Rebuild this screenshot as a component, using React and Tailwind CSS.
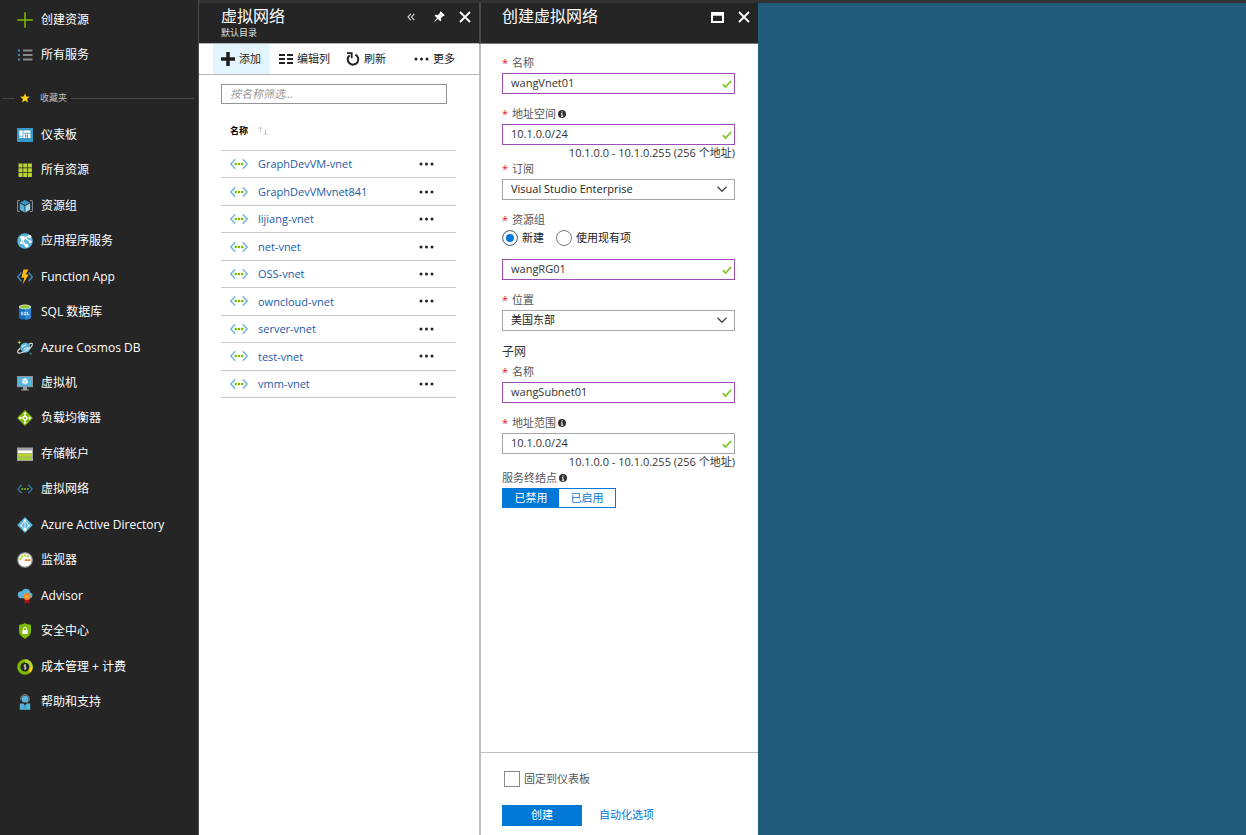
import React, { useState } from "react";

/* ---------- sidebar icons ---------- */

function Icon({ children }) {
  return (
    <svg viewBox="0 0 16 16" className="size-4 shrink-0" aria-hidden="true">
      {children}
    </svg>
  );
}

const PlusIcon = () => (
  <Icon>
    <path d="M8 0.2v15.6M0.2 8h15.6" stroke="#7fba00" strokeWidth="1.5" />
  </Icon>
);

const ListIcon = () => (
  <Icon>
    <path d="M1 3.5h2M1 8h2M1 12.5h2" stroke="#3f8fb0" strokeWidth="1.8" />
    <path d="M6 3.5h9.5M6 8h9.5M6 12.5h9.5" stroke="#8a8a8a" strokeWidth="1.8" />
  </Icon>
);

const DashboardIcon = () => (
  <Icon>
    <rect y="1" width="16" height="14" fill="#3999c6" />
    <path d="M2.300 3.500h3.400v5.200H2.300zM6.300 3.500h7.200v2.200H6.300zM2.300 9.400h3.400V11H2.300zM6.300 6.400h1.700V11H6.300zM8.700 9.400h1.300V11H8.700zM8.700 6.400h1.300v2.200H8.700zM10.800 6.400h2.700V11h-2.700z" fill="#fff" />
  </Icon>
);

const GridIcon = () => (
  <Icon>
    <path d="M1.5 1.5h4v4h-4zM6.2 1.5h4v4h-4zM10.9 1.5h4v4h-4zM1.5 6.2h4v4h-4zM6.2 6.2h4v4h-4zM10.9 6.2h4v4h-4zM1.5 10.9h4v4h-4zM6.2 10.9h4v4h-4zM10.9 10.9h4v4h-4z" fill="#b8d432" />
  </Icon>
);

const ResourceGroupIcon = () => (
  <Icon>
    <path d="M3 2.5H1.4a.8.8 0 0 0-.8.8v9.4a.8.8 0 0 0 .8.8H3M13 2.5h1.6a.8.8 0 0 1 .8.8v9.4a.8.8 0 0 1-.8.8H13" fill="none" stroke="#8a8a8a" strokeWidth="1.1" />
    <path d="M8 2l5 2.4L8 6.9 3 4.4z" fill="#3999c6" />
    <path d="M2.8 5.3l4.8 2.4v6.8l-4.8-2.7z" fill="#59b4d9" />
    <path d="M13.2 5.3L8.4 7.7v6.8l4.8-2.7z" fill="#a5d6ea" />
  </Icon>
);

const AppServiceIcon = () => (
  <Icon>
    <circle cx="8" cy="8" r="7.8" fill="#59b4d9" />
    <path d="M2.8 4.2C6 3.8 9.5 5.5 13 8.5M6 5.2c-.2 2.8.6 5 3.6 7.4M4 9.5l2-4.3M6 5.2L12.4 3M9.6 12.6L4.2 9.4" stroke="#fff" strokeWidth="1.1" fill="none" />
    <circle cx="5.8" cy="5.2" r="2.2" fill="#fff" />
    <circle cx="4.2" cy="9.8" r="1.4" fill="#fff" />
    <circle cx="9.6" cy="12.6" r="1.9" fill="#fff" />
    <circle cx="12.6" cy="3.6" r="1.7" fill="#fff" />
    <circle cx="13.2" cy="8.8" r="1.4" fill="#fff" />
  </Icon>
);

const FunctionIcon = () => (
  <Icon>
    <path d="M4.4 3.4L.7 7.8l3.7 4.4M11.6 3.4l3.7 4.4-3.7 4.4" fill="none" stroke="#3f87b0" strokeWidth="1.5" />
    <path d="M6.5.6h5L8.7 5.4h3.1L5.6 15.4l1.7-6.7H4.3z" fill="#fcb813" />
  </Icon>
);

const SqlIcon = () => (
  <Icon>
    <path d="M2 2.8v10.6c0 1.2 2.7 2.2 6 2.2s6-1 6-2.2V2.8z" fill="#1070c4" />
    <path d="M8 2.8h6v10.6c0 1.2-2.7 2.2-6 2.2z" fill="#2f86d0" />
    <ellipse cx="8" cy="2.9" rx="6" ry="2.4" fill="#e6efe0" />
    <ellipse cx="8" cy="2.8" rx="4.8" ry="1.6" fill="#8fc31f" />
    <path d="M5.8 8.2H4.2v1.2h1.4v1.4H3.8M7.1 8.2h1.8v2.5H7.1zM8.4 10.4l.9 1.1M10.5 7.9v2.8h1.8" fill="none" stroke="#fff" strokeWidth=".75" />
  </Icon>
);

const CosmosIcon = () => (
  <Icon>
    <path d="M11.500 4.400C14 3.100 15.600 3 15.500 4.400" fill="none" stroke="#d5dde0" strokeWidth="1.200" />
    <circle cx="8.300" cy="7.800" r="5" fill="#59b4d9" />
    <path d="M4.500 6.400c2 .4 2.600-1.300 4.600-1M7 8.800c2 .4 3-1 5.600-.8" stroke="#c4e6f4" strokeWidth="1.500" fill="none" />
    <path d="M15.500 4.400c-.2 1.900-3.300 4.700-7 6.600C4.800 13 1.100 13.900.7 12.300.4 11.100 1.600 9.500 3.400 8" fill="none" stroke="#d5dde0" strokeWidth="1.200" />
    <path d="M2.300.2l.6 1.500 1.500.6-1.500.6-.6 1.500-.6-1.500-1.500-.6 1.500-.6z" fill="#b8d432" />
    <circle cx="13.700" cy="13.700" r="1.100" fill="#2f86a8" />
  </Icon>
);

const VmIcon = () => (
  <Icon>
    <rect y="1" width="16" height="11.200" fill="#8b9399" />
    <rect x="1" y="2" width="14" height="9.200" fill="#59b4d9" />
    <path d="M6 12h4v2.400h2v1.200H4v-1.200h2z" fill="#a0a1a2" />
    <path d="M8 3.200l2.700 1.400v3.400L8 9.600 5.300 8V4.600z" fill="#fff" />
    <path d="M5.300 4.600L8 6l2.700-1.400M8 6v3.600" stroke="#59b4d9" strokeWidth=".6" fill="none" />
  </Icon>
);

const LoadBalancerIcon = () => (
  <Icon>
    <path d="M8 .1L15.900 8 8 15.900.100 8z" fill="#7fba00" />
    <path d="M8 3v10M3 8h10" stroke="#fff" strokeWidth="1.200" />
    <path d="M8 1.700l1.700 2.200H6.300zM8 14.300l1.700-2.200H6.300zM1.700 8l2.200-1.700v3.400zM14.300 8l-2.200-1.700v3.400z" fill="#fff" />
    <circle cx="8" cy="8" r="2.500" fill="#fff" />
    <circle cx="8" cy="8" r="1.100" fill="#7fba00" />
  </Icon>
);

const StorageIcon = () => (
  <Icon>
    <rect y="1.500" width="16" height="13.500" fill="#a0a1a2" />
    <rect x="1" y="4.500" width="14" height="2.500" fill="#fff" />
    <rect x="1" y="7.600" width="14" height="3" fill="#b8d432" />
    <rect x="1" y="11.200" width="14" height="3" fill="#a5cd3c" />
  </Icon>
);

const NetworkIcon = () => (
  <Icon>
    <path d="M4.700 3.700L.8 8l3.900 4.300M11.300 3.700L15.200 8l-3.900 4.300" fill="none" stroke="#3a789c" strokeWidth="1.300" />
    <circle cx="5.100" cy="8" r="1" fill="#7fba00" />
    <circle cx="8" cy="8" r="1" fill="#7fba00" />
    <circle cx="10.900" cy="8" r="1" fill="#7fba00" />
  </Icon>
);

const DirectoryIcon = () => (
  <Icon>
    <path d="M8 .1L15.900 8 8 15.900.100 8z" fill="#59b4d9" />
    <path d="M8 3v10M8 3.200L4 8.600 8 12.800l4-4.200z" fill="none" stroke="#fff" strokeWidth=".9" />
    <circle cx="8" cy="3.400" r="1.200" fill="#fff" />
    <circle cx="4.200" cy="8.600" r="1.100" fill="#fff" />
    <circle cx="11.800" cy="8.600" r="1.100" fill="#fff" />
    <circle cx="8" cy="12.500" r="1.500" fill="#fff" />
  </Icon>
);

const MonitorIcon = () => (
  <Icon>
    <circle cx="8" cy="8" r="7.200" fill="#fff" stroke="#a0a1a2" strokeWidth="1.300" />
    <path d="M3.400 8.200a4.700 4.700 0 0 1 8.400-3" fill="none" stroke="#b8d432" strokeWidth="2" strokeDasharray="2.400 .6" />
    <path d="M13.600 7.200v1.900H8.200a1 1 0 0 1 0-1.900z" fill="#ef7f2b" />
  </Icon>
);

const AdvisorIcon = () => (
  <Icon>
    <path d="M13 10.200a2.900 2.900 0 0 0 .3-5.700A4.400 4.400 0 0 0 5 3.300 3.500 3.500 0 0 0 3.600 10.200z" fill="#59b4d9" />
    <path d="M7.700 10.500h4.700v5.300l-2.300-1.500-2.400 1.500z" fill="#ba141a" />
    <circle cx="10" cy="8.600" r="3.500" fill="#f58220" />
    <circle cx="10" cy="8.600" r="2.100" fill="#fd9a3a" />
  </Icon>
);

const SecurityIcon = () => (
  <Icon>
    <path d="M8 .1c1.600 1.200 3.700 1.700 6 1.700v6.300c0 3.600-2.700 6-6 7.800-3.300-1.800-6-4.200-6-7.800V1.800C4.300 1.800 6.400 1.300 8 .1z" fill="#7fba00" />
    <rect x="5.400" y="7" width="5.200" height="4" fill="#fff" />
    <path d="M6.400 7V5.900a1.600 1.600 0 0 1 3.200 0V7" fill="none" stroke="#fff" strokeWidth="1" />
  </Icon>
);

const CostIcon = () => (
  <Icon>
    <circle cx="8" cy="8" r="6.200" fill="none" stroke="#7fba00" strokeWidth="3.200" />
    <path d="M8 1.800a6.200 6.200 0 0 1 6.200 6.200" fill="none" stroke="#b8d432" strokeWidth="3.200" />
    <path d="M14.200 8a6.200 6.200 0 0 1-1.900 4.500" fill="none" stroke="#fcd116" strokeWidth="3.200" />
    <path d="M9.200 6.600c-.6-.7-2.300-.6-2.300.3 0 1.300 2.400.8 2.400 2.100 0 1-1.900 1.100-2.500.3M8 5.200v5.600" fill="none" stroke="#fff" strokeWidth=".7" />
  </Icon>
);

const SupportIcon = () => (
  <Icon>
    <path d="M2.800 9.500h3.400L8 11.500l1.800-2h3.400v6.300H2.800z" fill="#59b4d9" />
    <circle cx="8" cy="5" r="3.500" fill="#59b4d9" />
    <path d="M3.700 5.800C3.300 2.500 5.500.6 8 .6s4.700 1.900 4.300 5.200c-.3 1.600-1.500 2.500-3.200 2.600" fill="none" stroke="#8a8a8a" strokeWidth="1" />
    <path d="M8 11.200l2 2-2 1.500-2-1.500z" fill="#3999c6" />
  </Icon>
);

/* ---------- small glyphs ---------- */

const CloseIcon = () => (
  <svg viewBox="0 0 12 12" className="size-3" aria-hidden="true">
    <path d="M1 1l10 10M11 1L1 11" stroke="#fff" strokeWidth="1.800" />
  </svg>
);

const CheckIcon = () => (
  <svg viewBox="0 0 10 10" className="pointer-events-none absolute right-[3px] top-[6px] size-[10px]" aria-hidden="true">
    <path d="M.8 5.200l2.700 3L9.200 1.800" fill="none" stroke="#8cc63a" strokeWidth="1.900" />
  </svg>
);

const ChevronIcon = () => (
  <svg viewBox="0 0 10 10" className="pointer-events-none absolute right-2 top-[5px] size-[10px]" aria-hidden="true">
    <path d="M.5 2.800L5 7.300l4.500-4.500" fill="none" stroke="#444" strokeWidth="1.300" />
  </svg>
);

const InfoIcon = () => (
  <svg viewBox="0 0 8 8" className="ml-[2px] size-2" aria-hidden="true">
    <circle cx="4" cy="4" r="4" fill="#333" />
    <path d="M4 1.300v1.200M3 3.600h1v2.600M3 6.300h2.200" stroke="#fff" strokeWidth="1" fill="none" />
  </svg>
);

const VnetIcon = () => (
  <svg viewBox="0 0 18 12" className="h-3 w-[18px]" aria-hidden="true">
    <path d="M5.200 1.200L.8 6l4.400 4.800M12.800 1.200L17.200 6l-4.400 4.800" fill="none" stroke="#71b6da" strokeWidth="1.400" />
    <circle cx="5.800" cy="6" r="1.300" fill="#7fba00" />
    <circle cx="9" cy="6" r="1.300" fill="#7fba00" />
    <circle cx="12.200" cy="6" r="1.300" fill="#7fba00" />
  </svg>
);

const DotsIcon = () => (
  <svg viewBox="0 0 15 4" className="h-1 w-[15px]" aria-hidden="true">
    <circle cx="2" cy="2" r="1.500" fill="#222" />
    <circle cx="7.500" cy="2" r="1.500" fill="#222" />
    <circle cx="13" cy="2" r="1.500" fill="#222" />
  </svg>
);

/* ---------- data ---------- */

const topItems = [
  { label: "创建资源", icon: PlusIcon },
  { label: "所有服务", icon: ListIcon },
];

const favorites = [
  { label: "仪表板", icon: DashboardIcon },
  { label: "所有资源", icon: GridIcon },
  { label: "资源组", icon: ResourceGroupIcon },
  { label: "应用程序服务", icon: AppServiceIcon },
  { label: "Function App", icon: FunctionIcon },
  { label: "SQL 数据库", icon: SqlIcon },
  { label: "Azure Cosmos DB", icon: CosmosIcon },
  { label: "虚拟机", icon: VmIcon },
  { label: "负载均衡器", icon: LoadBalancerIcon },
  { label: "存储帐户", icon: StorageIcon },
  { label: "虚拟网络", icon: NetworkIcon },
  { label: "Azure Active Directory", icon: DirectoryIcon },
  { label: "监视器", icon: MonitorIcon },
  { label: "Advisor", icon: AdvisorIcon },
  { label: "安全中心", icon: SecurityIcon },
  { label: "成本管理 + 计费", icon: CostIcon },
  { label: "帮助和支持", icon: SupportIcon },
];

const networks = [
  "GraphDevVM-vnet",
  "GraphDevVMvnet841",
  "lijiang-vnet",
  "net-vnet",
  "OSS-vnet",
  "owncloud-vnet",
  "server-vnet",
  "test-vnet",
  "vmm-vnet",
];

/* ---------- sidebar ---------- */

function NavLink({ item }) {
  const ItemIcon = item.icon;
  return (
    <a href="#" className="flex items-center gap-2 pl-[17px] text-xs text-white">
      <ItemIcon />
      <span>{item.label}</span>
    </a>
  );
}

function Sidebar() {
  return (
    <nav className="w-[199px] shrink-0 border-r border-[#4d4d4d] bg-[#252525] pt-[2px]">
      <div className="grid h-[70px] auto-rows-fr">
        {topItems.map((item) => (
          <NavLink key={item.label} item={item} />
        ))}
      </div>
      <div className="mt-[18px] flex h-4 items-center pl-[3px] pr-1">
        <span className="h-px w-3 bg-[#474747]" />
        <svg viewBox="0 0 10 10" className="ml-[5px] size-[10px]" aria-hidden="true">
          <path d="M5 .2l1.300 3.300 3.500.2-2.700 2.300.9 3.500L5 7.500 2 9.500l.9-3.500L.2 3.700l3.500-.2z" fill="#fcd116" />
        </svg>
        <span className="ml-[10px] text-[9px] text-[#c0c0c0]">收藏夹</span>
        <span className="ml-1 h-px flex-1 bg-[#474747]" />
      </div>
      <div className="mt-[11px] grid h-[603px] auto-rows-fr">
        {favorites.map((item) => (
          <NavLink key={item.label} item={item} />
        ))}
      </div>
    </nav>
  );
}

/* ---------- network list ---------- */

function NetworkList() {
  return (
    <section className="w-[280px] shrink-0">
      <header className="flex h-10 justify-between bg-[#252525] pl-[22px] pr-2 text-white">
        <div className="pt-[3px]">
          <h1 className="text-base leading-5">虚拟网络</h1>
          <p className="mt-px text-[9px] leading-3 text-[#e0e0e0]">默认目录</p>
        </div>
        <div className="flex h-7 items-center gap-[14px]">
          <button type="button" aria-label="折叠">
            <svg viewBox="0 0 8 8" className="size-2" aria-hidden="true">
              <path d="M3.800.8L1 4l2.800 3.200M7.300.8L4.500 4l2.800 3.200" fill="none" stroke="#ddd" strokeWidth="1.100" />
            </svg>
          </button>
          <button type="button" aria-label="固定" className="pl-1">
            <svg viewBox="0 0 12 12" className="size-3" aria-hidden="true">
              <path d="M7.700.2l4.100 4.100-.8.8-.8-.2-2.200 2.300.2 2.200-.9.900-2.400-2.300L.3 11.800l3.700-4.800L1.700 4.700l.9-.9 2.200.2L7.100 1.800 6.900 1z" fill="#fff" />
            </svg>
          </button>
          <button type="button" aria-label="关闭">
            <CloseIcon />
          </button>
        </div>
      </header>

      <div className="flex h-8 items-stretch border-b border-t border-[#b5b5b5] pl-[14px] text-[11px] text-[#222]">
        <button type="button" className="flex w-[57px] items-center gap-1 bg-[#e3f6fe] pl-2">
          <svg viewBox="0 0 14 14" className="size-[14px]" aria-hidden="true">
            <path d="M7 0v14M0 7h14" stroke="#1e1e1e" strokeWidth="3.500" />
          </svg>
          添加
        </button>
        <button type="button" className="ml-[9px] flex items-center gap-1">
          <svg viewBox="0 0 14 12" className="h-3 w-[14px]" aria-hidden="true">
            <path d="M0 2h6M0 6h6M0 10h6M8 2h6M8 6h6M8 10h6" stroke="#222" strokeWidth="2.200" />
          </svg>
          编辑列
        </button>
        <button type="button" className="ml-4 flex items-center gap-1">
          <svg viewBox="0 0 14 14" className="size-[14px]" aria-hidden="true">
            <path d="M9.400 2.600A5.300 5.300 0 1 1 3.600 3.300" fill="none" stroke="#222" strokeWidth="2" />
            <path d="M1 1.200h4.700v5" fill="none" stroke="#222" strokeWidth="1.800" />
          </svg>
          刷新
        </button>
        <button type="button" className="ml-7 flex items-center gap-1">
          <DotsIcon />
          更多
        </button>
      </div>

      <div className="pl-[22px] pr-[23px]">
        <div className="pt-[9px]">
          <input
            type="text"
            aria-label="按名称筛选"
            placeholder="按名称筛选..."
            className="block h-5 w-[226px] border border-[#949494] bg-white px-2 pb-[2px] text-[11px] italic text-[#333] outline-none placeholder:text-[#9a9a9a]"
          />
        </div>
        <div className="mt-[7px] flex h-10 items-center border-b border-[#c8c8c8] pl-[9px]">
          <button type="button" className="flex items-center gap-[10px] text-[9px] font-bold text-black">
            名称
            <svg viewBox="0 0 10 10" className="size-[10px]" aria-hidden="true">
              <path d="M2.500 6.500V1M.7 2.800L2.500 1l1.800 1.800M7.500 3v6M5.700 7.200L7.500 9l1.800-1.800" fill="none" stroke="#c4c4c4" strokeWidth=".9" />
            </svg>
          </button>
        </div>
        <ul className="grid h-[247px] auto-rows-fr text-[11px]">
          {networks.map((name) => (
            <li key={name} className="flex items-center border-b border-[#c8c8c8] pl-[9px] pr-[22px]">
              <VnetIcon />
              <a href="#" className="ml-[10px] flex-1 pt-px text-[#1a5ba8]">
                {name}
              </a>
              <button type="button" aria-label={"更多操作 " + name} className="flex h-4 items-center">
                <DotsIcon />
              </button>
            </li>
          ))}
        </ul>
      </div>
    </section>
  );
}

/* ---------- create form ---------- */

function FieldLabel({ htmlFor, id, required, info, children }) {
  const Tag = htmlFor ? "label" : "div";
  return (
    <Tag htmlFor={htmlFor} id={id} className="flex h-4 items-center text-[11px] leading-4 text-[#555]">
      {required && <span className="w-[10px] text-[#e81123]">*</span>}
      {children}
      {info && <InfoIcon />}
    </Tag>
  );
}

function TextField({ id, label, value, info, muted, hint }) {
  return (
    <div>
      <FieldLabel htmlFor={id} required info={info}>
        {label}
      </FieldLabel>
      <ValidInput id={id} value={value} muted={muted} />
      {hint && <p className="h-4 text-right text-[11px] leading-4 text-[#333]">{hint}</p>}
    </div>
  );
}

function ValidInput({ id, value, muted, label }) {
  return (
    <div className="relative mt-[2px]">
      <input
        id={id}
        type="text"
        aria-label={label}
        defaultValue={value}
        className={
          "block h-[21px] w-full border bg-white pb-[3px] pl-2 pr-4 text-[11px] text-[#333] outline-none " +
          (muted ? "border-[#a6a6a6]" : "border-[#9b4fb5]")
        }
      />
      <CheckIcon />
    </div>
  );
}

function SelectField({ id, label, value }) {
  return (
    <div>
      <FieldLabel htmlFor={id} required>
        {label}
      </FieldLabel>
      <div className="relative mt-[2px]">
        <select
          id={id}
          defaultValue={value}
          className="block h-[21px] w-full appearance-none border border-[#a6a6a6] bg-white pl-2 pr-6 text-[11px] text-[#222] outline-none"
        >
          <option>{value}</option>
        </select>
        <ChevronIcon />
      </div>
    </div>
  );
}

function Radio({ id, label, defaultChecked }) {
  return (
    <label htmlFor={id} className="flex items-center gap-1">
      <input
        id={id}
        type="radio"
        name="resource-group-mode"
        defaultChecked={defaultChecked}
        className="size-4 appearance-none rounded-full border border-[#767676] bg-white checked:bg-[#0078d7] checked:shadow-[inset_0_0_0_3px_white]"
      />
      {label}
    </label>
  );
}

function EndpointToggle() {
  const [enabled, setEnabled] = useState(false);
  const on = "w-14 bg-[#0078d7] text-white";
  const off = "w-14 bg-white text-[#0078d7]";
  return (
    <div role="group" aria-labelledby="endpoints" className="mt-[2px] flex h-5 w-fit border border-[#0078d7] text-[11px]">
      <button type="button" aria-pressed={!enabled} onClick={() => setEnabled(false)} className={enabled ? off : on}>
        已禁用
      </button>
      <button type="button" aria-pressed={enabled} onClick={() => setEnabled(true)} className={enabled ? on : off}>
        已启用
      </button>
    </div>
  );
}

function CreateForm() {
  return (
    <section className="flex w-[279px] shrink-0 flex-col bg-white">
      <header className="flex h-[41px] justify-between border-b border-l-2 border-b-[#777] border-l-[#4a4a4a] bg-[#252525] pl-[21px] pr-2 text-white">
        <h2 className="pt-[3px] text-base leading-5">创建虚拟网络</h2>
        <div className="flex h-7 items-center gap-[14px]">
          <button type="button" aria-label="最大化">
            <svg viewBox="0 0 13 11" className="h-[11px] w-[13px]" aria-hidden="true">
              <path d="M1 1h11v9H1z" fill="none" stroke="#fff" strokeWidth="2" />
              <path d="M0 2h13" stroke="#fff" strokeWidth="3.500" />
            </svg>
          </button>
          <button type="button" aria-label="关闭">
            <CloseIcon />
          </button>
        </div>
      </header>

      <form className="flex flex-1 flex-col border-l-2 border-[#bdbdbd]" onSubmit={(e) => e.preventDefault()}>
        <div className="flex-1 pl-[21px] pr-[23px] pt-[11px]">
          <TextField id="vnet-name" label="名称" value="wangVnet01" />
          <div className="mt-3">
            <TextField
              id="address-space"
              label="地址空间"
              value="10.1.0.0/24"
              info
              hint="10.1.0.0 - 10.1.0.255 (256 个地址)"
            />
          </div>
          <SelectField id="subscription" label="订阅" value="Visual Studio Enterprise" />
          <div className="mt-3" role="radiogroup" aria-labelledby="resource-group">
            <FieldLabel id="resource-group" required>
              资源组
            </FieldLabel>
            <div className="flex h-5 items-center gap-3 text-[11px] text-[#222]">
              <Radio id="rg-new" label="新建" defaultChecked />
              <Radio id="rg-existing" label="使用现有项" />
            </div>
            <div className="pt-[9px]">
              <ValidInput id="rg-name" value="wangRG01" label="资源组名称" />
            </div>
          </div>
          <div className="mt-3">
            <SelectField id="location" label="位置" value="美国东部" />
          </div>
          <h3 className="mb-1 mt-[13px] h-4 text-xs leading-4 text-[#333]">子网</h3>
          <TextField id="subnet-name" label="名称" value="wangSubnet01" />
          <div className="mt-3">
            <TextField
              id="address-range"
              label="地址范围"
              value="10.1.0.0/24"
              info
              muted
              hint="10.1.0.0 - 10.1.0.255 (256 个地址)"
            />
          </div>
          <FieldLabel id="endpoints" info>
            服务终结点
          </FieldLabel>
          <EndpointToggle />
        </div>

        <footer className="border-t border-[#bdbdbd] pb-[9px] pl-[21px] pt-[18px]">
          <div className="flex h-4 items-center gap-1 pl-[2px] text-[11px] text-[#555]">
            <input
              id="pin"
              type="checkbox"
              className="size-4 appearance-none border border-[#8a8a8a] bg-white checked:bg-[#0078d7]"
            />
            <label htmlFor="pin">固定到仪表板</label>
          </div>
          <div className="mt-[18px] flex items-center gap-[17px] text-[11px]">
            <button type="submit" className="h-[21px] w-20 bg-[#0078d7] text-white">
              创建
            </button>
            <a href="#" className="text-[#0078d7]">
              自动化选项
            </a>
          </div>
        </footer>
      </form>
    </section>
  );
}

export default function App() {
  return (
    <div className="flex min-h-screen bg-[#235b7d] font-['Open_Sans','Noto_Sans_CJK_SC',sans-serif]">
      <Sidebar />
      <div className="flex min-w-0 flex-1 flex-col">
        <div className="h-[3px] bg-[#333]" />
        <main className="flex flex-1">
          <div className="flex bg-white">
            <NetworkList />
            <CreateForm />
          </div>
        </main>
      </div>
    </div>
  );
}
